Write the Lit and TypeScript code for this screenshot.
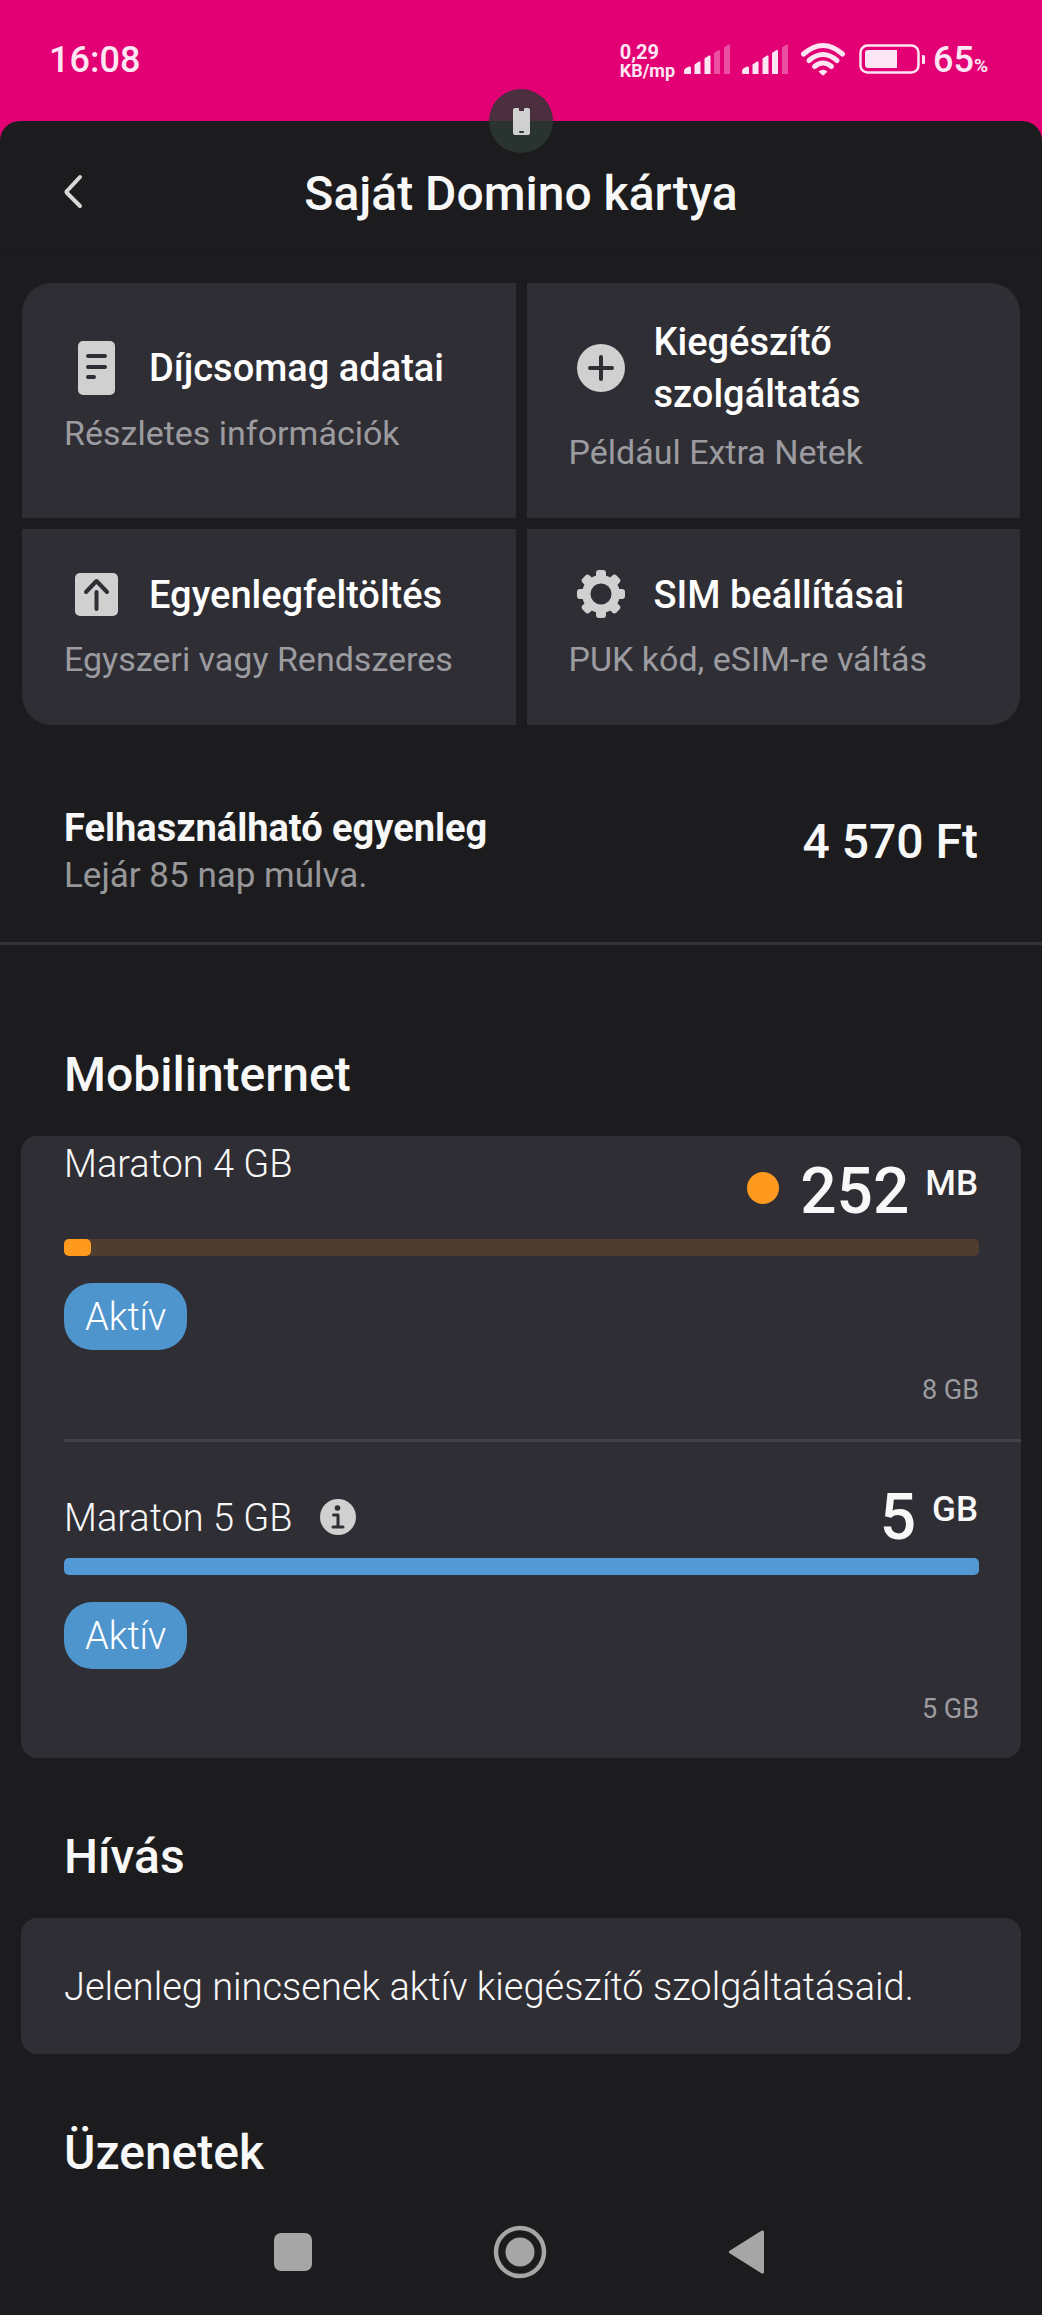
import { LitElement, html, css, svg, nothing } from "lit";
import { customElement, property } from "lit/decorators.js";

interface Tile {
  icon: string;
  title: string;
  note: string;
}

interface Plan {
  name: string;
  info: boolean;
  low: boolean;
  amount: string;
  unit: string;
  total: string;
  percent: number;
}

const TILES: Tile[] = [
  { icon: "doc", title: "Díjcsomag adatai", note: "Részletes információk" },
  { icon: "plus", title: "Kiegészítő szolgáltatás", note: "Például Extra Netek" },
  { icon: "upload", title: "Egyenlegfeltöltés", note: "Egyszeri vagy Rendszeres" },
  { icon: "gear", title: "SIM beállításai", note: "PUK kód, eSIM-re váltás" },
];

const PLANS: Plan[] = [
  { name: "Maraton 4 GB", info: false, low: true, amount: "252", unit: "MB", total: "8 GB", percent: 3 },
  { name: "Maraton 5 GB", info: true, low: false, amount: "5", unit: "GB", total: "5 GB", percent: 100 },
];

const TILE_ICONS: Record<string, unknown> = {
  doc: svg`
    <rect x="14" y="5" width="37" height="54" rx="5" fill="#d0d0d0"/>
    <path d="M24 20H41M24 31H41M24 41H30" stroke="#2f2e35" stroke-width="4" stroke-linecap="round" fill="none"/>`,
  plus: svg`
    <circle cx="32" cy="32" r="24" fill="#d0d0d0"/>
    <path d="M32 21V43M21 32H43" stroke="#2f2e35" stroke-width="4" stroke-linecap="round" fill="none"/>`,
  upload: svg`
    <rect x="11" y="11" width="43" height="43" rx="5" fill="#d0d0d0"/>
    <path d="M32.500 30V47M22 30L32.500 19L43 30" stroke="#2f2e35" stroke-width="4" stroke-linecap="round" stroke-linejoin="round" fill="none"/>`,
  gear: svg`
    <g fill="#d0d0d0">
      ${[0, 45, 90, 135].map((a) => svg`<rect x="27" y="8" width="10" height="48" rx="3" transform="rotate(${a} 32 32)"/>`)}
      <circle cx="32" cy="32" r="19"/>
    </g>
    <circle cx="32" cy="32" r="10.500" fill="#2f2e35"/>`,
};

/** Five-step signal meter; steps above `level` are dimmed. */
const signal = (level: number) => html`
  <svg class="signal" viewBox="0 0 46 30" aria-hidden="true">
    ${[
      "M0 27Q0 25 2 24L5 22.500Q7 22 7 24V30H1.500Q0 30 0 28.500Z",
      "M10.500 20.500L15 17.500Q16.500 17 16.500 18.500V30H10.500Z",
      "M20.500 14.500L25 11.500Q26.500 11 26.500 12.500V30H20.500Z",
      "M30 9L34.500 6Q36 5.500 36 7V30H30Z",
      "M40 3.500L44.500 .5Q46 0 46 1.500V30H40Z",
    ].map((d, i) => svg`<path d=${d} fill="#fde6f3" opacity=${i < level ? 1 : 0.35}/>`)}
  </svg>
`;

@customElement("status-bar")
export class StatusBar extends LitElement {
  static styles = css`
    :host {
      display: flex;
      align-items: center;
      height: 121px;
      box-sizing: border-box;
      padding: 0 54px 3px 49px;
      color: #fde6f3;
      font-weight: 500;
    }
    .clock {
      flex: 1;
      font-size: 36px;
      line-height: 44px;
      padding-top: 2px;
    }
    .speed {
      font-weight: 700;
      margin-right: 9px;
      padding-top: 3px;
    }
    .speed span {
      display: block;
      font-size: 20px;
      line-height: 20px;
    }
    .speed .per {
      font-size: 18px;
      line-height: 18px;
    }
    .signal {
      width: 46px;
      height: 30px;
      margin-right: 12px;
    }
    .wifi {
      width: 46px;
      height: 34px;
      margin-right: 13px;
    }
    .battery {
      width: 67px;
      height: 30px;
      margin-right: 7px;
    }
    .level {
      font-size: 36px;
      line-height: 44px;
      padding-top: 2px;
    }
    .level small {
      font-size: 19px;
      font-weight: 700;
      line-height: 20px;
    }
  `;

  render() {
    return html`
      <span class="clock">16:08</span>
      <span class="speed"><span>0,29</span><span class="per">KB/mp</span></span>
      ${signal(3)} ${signal(4)}
      <svg class="wifi" viewBox="0 0 46 34" aria-hidden="true">
        <g fill="none" stroke="#fde6f3" stroke-width="5" stroke-linecap="round">
          <path d="M3.500 12Q23 -5 42.500 12"/>
          <path d="M9 18.500Q23 6.500 37 18.500"/>
          <path d="M14.500 24.500Q23 17.500 31.500 24.500"/>
        </g>
        <path d="M18.500 29.500Q23 26 27.500 29.500L24 33Q23 33.800 22 33Z" fill="#fde6f3"/>
      </svg>
      <svg class="battery" viewBox="0 0 67 30" aria-hidden="true">
        <rect x="1.500" y="1.500" width="58" height="27" rx="7" fill="none" stroke="#fde6f3" stroke-width="2.500"/>
        <path d="M9 6H38V24H9Q6 24 6 21V9Q6 6 9 6Z" fill="#fde6f3"/>
        <path d="M63 11H64.500Q66 11 66 12.500V18.500Q66 20 64.500 20H63Z" fill="#fde6f3"/>
      </svg>
      <span class="level">65<small>%</small></span>
    `;
  }
}

@customElement("menu-tile")
export class MenuTile extends LitElement {
  @property({ attribute: false }) tile!: Tile;

  static styles = css`
    :host {
      display: flex;
      overflow: hidden;
      background: #2f2e35;
    }
    .tile {
      flex: 1;
      display: flex;
      flex-direction: column;
      justify-content: center;
      gap: 12px;
      padding: 32px 42px 46px;
      border: 0;
      background: none;
      color: inherit;
      font: inherit;
      text-align: left;
    }
    .head {
      display: flex;
      align-items: center;
      gap: 21px;
      min-height: 66px;
    }
    .icon {
      flex: none;
      width: 64px;
      height: 64px;
    }
    .title {
      padding-top: 1px;
      color: #fff;
      font-size: 38px;
      font-weight: 500;
      line-height: 52px;
    }
    .note {
      color: #9c9ca0;
      font-size: 34px;
      line-height: 40px;
    }
  `;

  render() {
    return html`
      <button class="tile" type="button">
        <span class="head">
          <svg class="icon" viewBox="0 0 64 64" aria-hidden="true">${TILE_ICONS[this.tile.icon]}</svg>
          <span class="title">${this.tile.title}</span>
        </span>
        <span class="note">${this.tile.note}</span>
      </button>
    `;
  }
}

@customElement("plan-row")
export class PlanRow extends LitElement {
  @property({ attribute: false }) plan!: Plan;

  static styles = css`
    :host {
      display: block;
      padding-right: 42px;
    }
    .head {
      display: flex;
      align-items: center;
      justify-content: space-between;
      padding: 38px 0 2px;
    }
    .head.low {
      align-items: flex-start;
      padding: 2px 0 9px;
    }
    .name {
      display: flex;
      align-items: center;
      gap: 26px;
      font-size: 38px;
      font-weight: 300;
      line-height: 52px;
    }
    .info {
      display: flex;
      padding: 0;
      border: 0;
      background: none;
    }
    .info svg {
      width: 38px;
      height: 38px;
    }
    .value {
      display: flex;
      align-items: flex-start;
      gap: 16px;
      padding-right: 1px;
      font-weight: 500;
    }
    .low .value {
      padding-top: 16px;
    }
    .dot {
      width: 32px;
      height: 32px;
      margin: 18px 5px 0 0;
      border-radius: 50%;
      background: #ff9a1e;
    }
    .amount {
      font-size: 64px;
      line-height: 76px;
    }
    .unit {
      font-size: 35px;
      line-height: 60px;
    }
    .bar {
      height: 17px;
      border-radius: 5px;
      background: #4f3d30;
    }
    .fill {
      height: 100%;
      border-radius: 5px;
      background: #5299d6;
    }
    .fill.low {
      background: #ff9a1e;
    }
    .chip {
      display: inline-block;
      margin: 27px 0 22px;
      padding: 8px 21px 7px;
      border-radius: 28px;
      background: #4e94cd;
      color: #fff;
      font-size: 38px;
      font-weight: 300;
      line-height: 52px;
      vertical-align: top;
    }
    .total {
      padding-bottom: 31px;
      color: #9c9ca0;
      font-size: 27px;
      line-height: 36px;
      text-align: right;
    }
  `;

  render() {
    const p = this.plan;
    const tone = p.low ? "low" : "";
    return html`
      <div class="head ${tone}">
        <span class="name">
          ${p.name}
          ${p.info
            ? html`<button class="info" type="button" aria-label="Információ">
                <svg viewBox="0 0 38 38" aria-hidden="true">
                  <circle cx="19" cy="18" r="18" fill="#d0d0d0"/>
                  <circle cx="18.500" cy="9" r="2.800" fill="#2f2e35"/>
                  <path d="M14.500 16H19V28M14 28H24" fill="none" stroke="#2f2e35" stroke-width="3" stroke-linecap="round" stroke-linejoin="round"/>
                </svg>
              </button>`
            : nothing}
        </span>
        <span class="value">
          ${p.low ? html`<span class="dot"></span>` : nothing}
          <span class="amount">${p.amount}</span>
          <span class="unit">${p.unit}</span>
        </span>
      </div>
      <div class="bar"><div class="fill ${tone}" style="width:${p.percent}%"></div></div>
      <span class="chip">Aktív</span>
      <div class="total">${p.total}</div>
    `;
  }
}

@customElement("app-root")
export class AppRoot extends LitElement {
  static styles = css`
    :host {
      display: flex;
      flex-direction: column;
      min-height: 100vh;
      background: #e20074;
      color: #f8f8f8;
      font-family: Roboto, "Liberation Sans", sans-serif;
    }
    .sheet {
      position: relative;
      flex: 1;
      display: flex;
      flex-direction: column;
      border-radius: 20px 20px 0 0;
      background: #1c1c1e;
    }
    .badge {
      position: absolute;
      top: 0;
      left: 50%;
      width: 64px;
      height: 64px;
      transform: translate(-50%, -50%);
    }
    .header {
      display: grid;
      grid-template-columns: 64px 1fr 64px;
      align-items: center;
      height: 134px;
      box-sizing: border-box;
      padding: 9px 42px 0;
      border-bottom: 2px solid #1a1a1c;
    }
    .back {
      display: flex;
      justify-content: center;
      padding: 0;
      border: 0;
      background: none;
    }
    .back svg {
      width: 32px;
      height: 40px;
    }
    .title,
    .heading {
      margin: 0;
      font-size: 48px;
      font-weight: 500;
      line-height: 60px;
    }
    .title {
      padding-top: 4px;
      text-align: center;
    }
    .tiles {
      display: grid;
      grid-template-columns: 1fr 1fr;
      gap: 11px;
      margin: 28px 22px 0;
      border-radius: 30px;
      overflow: hidden;
    }
    .balance {
      display: flex;
      align-items: flex-start;
      justify-content: space-between;
      padding: 79px 64px 42px;
      border-bottom: 3px solid #323234;
      margin-bottom: 31px;
    }
    .label {
      font-size: 38px;
      font-weight: 700;
      line-height: 48px;
    }
    .expiry {
      color: #97979a;
      font-size: 35px;
      line-height: 48px;
    }
    .sum {
      font-size: 48px;
      font-weight: 500;
      line-height: 76px;
    }
    .heading {
      padding: 69px 64px 31px;
    }
    .heading.last {
      padding-bottom: 0;
    }
    .card {
      margin: 0 21px;
      padding-left: 43px;
      border-radius: 16px;
      background: #2f2e35;
    }
    .divider {
      height: 3px;
      background: #434248;
    }
    .empty {
      margin: 0;
      padding: 43px 42px 41px 0;
      font-size: 38px;
      font-weight: 300;
      line-height: 52px;
    }
    .nav {
      display: flex;
      align-items: center;
      justify-content: center;
      gap: 167px;
      height: 126px;
      margin-top: auto;
      padding-right: 2px;
    }
    .key {
      display: flex;
      padding: 0;
      border: 0;
      background: none;
    }
    .key svg {
      width: 60px;
      height: 60px;
    }
  `;

  render() {
    return html`
      <status-bar></status-bar>
      <main class="sheet">
        <svg class="badge" viewBox="0 0 64 64" aria-hidden="true">
          <circle cx="32" cy="32" r="32" fill="rgb(45 56 52)" fill-opacity=".83"/>
          <path d="M26 19H29Q30 19 30 20V22H35V20Q35 19 36 19H39Q41 19 41 21V44Q41 46 39 46H26Q24 46 24 44V21Q24 19 26 19Z" fill="#d0d0d0"/>
          <rect x="30" y="42" width="5" height="2" rx="1" fill="#2d3834"/>
        </svg>
        <header class="header">
          <button class="back" type="button" aria-label="Vissza">
            <svg viewBox="0 0 32 40" aria-hidden="true">
              <path d="M22 5L9 19Q8 20 9 21L22 34" fill="none" stroke="#d8d8d8" stroke-width="4" stroke-linecap="round" stroke-linejoin="round"/>
            </svg>
          </button>
          <h1 class="title">Saját Domino kártya</h1>
        </header>

        <div class="tiles">
          ${TILES.map((t) => html`<menu-tile .tile=${t}></menu-tile>`)}
        </div>

        <section class="balance">
          <div>
            <div class="label">Felhasználható egyenleg</div>
            <div class="expiry">Lejár 85 nap múlva.</div>
          </div>
          <div class="sum">4 570 Ft</div>
        </section>

        <h2 class="heading">Mobilinternet</h2>
        <section class="card">
          ${PLANS.map(
            (p, i) => html`${i ? html`<div class="divider"></div>` : nothing}<plan-row .plan=${p}></plan-row>`,
          )}
        </section>

        <h2 class="heading">Hívás</h2>
        <section class="card">
          <p class="empty">Jelenleg nincsenek aktív kiegészítő szolgáltatásaid.</p>
        </section>

        <h2 class="heading last">Üzenetek</h2>

        <nav class="nav">
          <button class="key" type="button" aria-label="Legutóbbiak">
            <svg viewBox="0 0 60 60" aria-hidden="true"><rect x="11" y="11" width="38" height="38" rx="7" fill="#a6a6a6"/></svg>
          </button>
          <button class="key" type="button" aria-label="Kezdőlap">
            <svg viewBox="0 0 60 60" aria-hidden="true">
              <circle cx="30" cy="30" r="24" fill="none" stroke="#a6a6a6" stroke-width="4.500"/>
              <circle cx="30" cy="30" r="14.500" fill="#a6a6a6"/>
            </svg>
          </button>
          <button class="key" type="button" aria-label="Vissza">
            <svg viewBox="0 0 60 60" aria-hidden="true">
              <path d="M13 28.500L44 9Q47 7.500 47 10V50Q47 52.500 44 51L13 31.500Q10.500 30 13 28.500Z" fill="#a6a6a6"/>
            </svg>
          </button>
        </nav>
      </main>
    `;
  }
}
